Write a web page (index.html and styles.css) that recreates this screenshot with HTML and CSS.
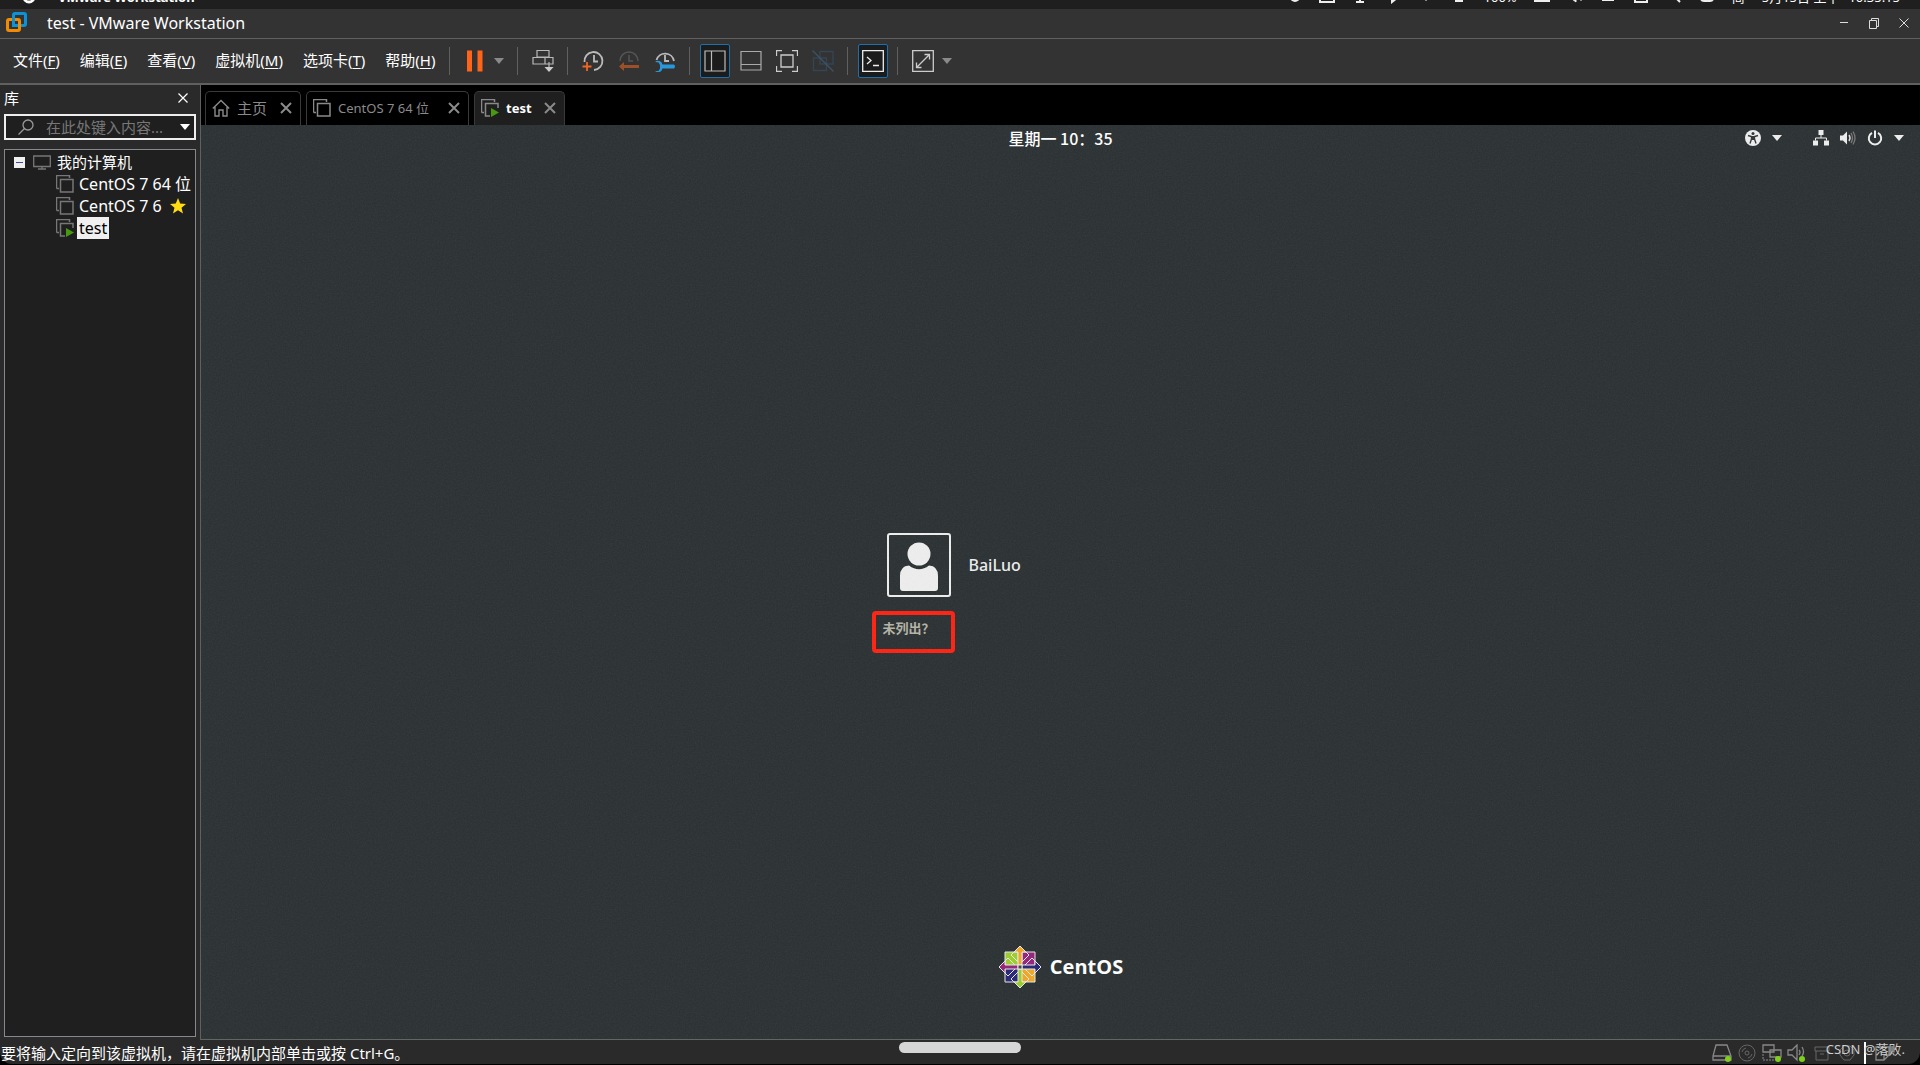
FILE: index.html
```html
<!DOCTYPE html>
<html lang="zh-CN">
<head>
<meta charset="utf-8">
<title>test - VMware Workstation</title>
<link rel="stylesheet" href="styles.css">
</head>
<body>
<svg class="defs" aria-hidden="true">
  <symbol id="vm" viewBox="0 0 18 18"><path d="M0.5 13.5V.5H13.5V3M.5 13.5H3M4.5 4.5H17V17H4.5z" fill="none" stroke="currentColor" stroke-width="1.5"/></symbol>
  <symbol id="vmrun" viewBox="0 0 18 18"><path d="M.5 13.5V.5H13.5V3M.5 13.5H3M17 9V4.500H4.500V17H9" fill="none" stroke="currentColor" stroke-width="1.5"/><path d="M10 9L18 13.500L10 18z" fill="#479a10"/></symbol>
  <symbol id="cross" viewBox="0 0 12 12"><path d="M1 1L11 11M11 1L1 11" fill="none" stroke="currentColor" stroke-width="2"/></symbol>
  <symbol id="thin-cross" viewBox="0 0 10 10"><path d="M.5 .5L9.500 9.500M9.500 .5L.5 9.500" fill="none" stroke="currentColor" stroke-width="1.200"/></symbol>
  <symbol id="caret" viewBox="0 0 10 6"><path d="M0 0H10L5 6z" fill="currentColor"/></symbol>
</svg>
<div class="app">
  <div class="macbar">
    <svg class="apple" viewBox="0 0 14 14"><circle cx="7" cy="7" r="5" fill="none" stroke="#fff" stroke-width="3"/></svg>
    <b class="macapp">VMware Workstation</b>
    <div class="tray">
      <svg class="i16" viewBox="0 0 16 16"><circle cx="6" cy="8" r="4" fill="#1a8a50"/><circle cx="9" cy="9" r="5" fill="#eee"/></svg>
      <svg class="i16" viewBox="0 0 16 16"><path d="M1 2V14H15V5M5 2V11H15" fill="none" stroke="#eee" stroke-width="2"/></svg>
      <svg class="i16" viewBox="0 0 16 16"><path d="M4 4V8Q8 13 12 8V4M8 10V14M4 14H12" fill="none" stroke="#eee" stroke-width="2"/></svg>
      <svg class="i16" viewBox="0 0 16 16"><path d="M4 4L12 10L7 14V2" fill="none" stroke="#eee" stroke-width="2"/></svg>
      <svg class="i16" viewBox="0 0 16 16"><path d="M3 8H13L8 13z" fill="#eee"/></svg>
      <svg class="i16" viewBox="0 0 16 16"><path d="M1 3H15V12H12V14H4V12H1z" fill="#eee"/></svg>
      <span>100%</span>
      <svg class="i16" viewBox="0 0 16 16"><path d="M1 4H15V13H1zM8 4V13M4 9H12" fill="none" stroke="#eee" stroke-width="2"/></svg>
      <svg class="i16" viewBox="0 0 16 16"><path d="M2 6H5L9 2V14L5 11H2zM11 6V12M14 4V13" fill="#eee" stroke="#eee"/></svg>
      <svg class="i16" viewBox="0 0 16 16"><path d="M2 3H14V13H2z" fill="#eee"/></svg>
      <svg class="i16" viewBox="0 0 16 16"><path d="M2 4V14H14V4M5 10Q10 12 12 4" fill="none" stroke="#eee" stroke-width="2"/></svg>
      <svg class="i16" viewBox="0 0 16 16"><circle cx="7" cy="6" r="4" fill="none" stroke="#eee" stroke-width="2"/><path d="M9 9L14 14" stroke="#eee" stroke-width="2"/></svg>
      <svg class="i16" viewBox="0 0 16 16"><rect x="1" y="6" width="14" height="8" rx="4" fill="#eee"/><circle cx="11" cy="10" r="2" fill="#222"/></svg>
      <span>简</span><span>5月15日 上午</span><span class="clock">10:35:15</span>
    </div>
  </div>

  <header class="titlebar">
    <svg class="logo" viewBox="0 0 22 22"><rect x="7.500" y="1.500" width="12" height="12" rx="1.500" fill="none" stroke="#0c93d5" stroke-width="3"/><rect x="1.500" y="7.500" width="12" height="11" rx="1.500" fill="none" stroke="#f38b00" stroke-width="3"/><path d="M7.500 6V13.500H12" fill="none" stroke="#0c93d5" stroke-width="3"/></svg>
    <span class="title">test - VMware Workstation</span>
    <button class="winbtn" aria-label="最小化"><svg viewBox="0 0 12 12"><path d="M2 5.500H10" stroke="#ddd"/></svg></button>
    <button class="winbtn" aria-label="还原"><svg viewBox="0 0 12 12"><path d="M1.500 3.500H8.500V11.500H1.500zM3.500 3V1.500H10.500V9.500H9" fill="none" stroke="#ddd"/></svg></button>
    <button class="winbtn" aria-label="关闭"><svg viewBox="0 0 12 12"><path d="M1.500 1.500L10.500 10.500M10.500 1.500L1.500 10.500" stroke="#ddd"/></svg></button>
  </header>

  <nav class="menubar">
    <div class="menus">
      <button>文件(<u>F</u>)</button><button>编辑(<u>E</u>)</button><button>查看(<u>V</u>)</button><button>虚拟机(<u>M</u>)</button><button>选项卡(<u>T</u>)</button><button>帮助(<u>H</u>)</button>
    </div>
    <div class="tools t-power">
      <button class="tool" aria-label="挂起"><svg viewBox="0 0 22 22"><path d="M3 .5H8V21.500H3zM13.500 .5H18.500V21.500H13.500z" fill="#ff6418"/></svg></button>
      <button class="drop" aria-label="电源选项"><svg class="caret"><use href="#caret"/></svg></button>
    </div>
    <div class="tools t-send">
      <button class="tool" aria-label="发送 Ctrl+Alt+Del"><svg viewBox="0 0 22 22" fill="none" stroke="#b8b8b8" stroke-width="1.200"><path d="M5 .5H17V7H5zM1 7.500H13V14H1zM13 7.500H21V14H13M17 12V20"/><path d="M12.500 17H21.500L17 22z" fill="#ccc" stroke="none"/></svg></button>
    </div>
    <div class="tools t-snap">
      <button class="tool" aria-label="拍摄快照"><svg viewBox="0 0 22 22" fill="none" stroke="#bbb" stroke-width="1.800"><path d="M2.500 12A9 9 0 1 1 12 20M12 5V11.500H16"/><path d="M5 12V21M.5 16.500H9.500" stroke="#f26522"/></svg></button>
      <button class="tool" aria-label="恢复快照"><svg viewBox="0 0 22 22" fill="none" stroke="#555" stroke-width="1.500"><path d="M2 11A9 9 0 0 1 20 11M11 5V11H15"/><path d="M1 16.500L6 12V15H21V18H6V21z" fill="#9b5028" stroke="none"/></svg></button>
      <button class="tool" aria-label="快照管理器"><svg viewBox="0 0 22 22" fill="none" stroke="#bbb" stroke-width="1.800"><path d="M2.500 10A9 9 0 0 1 20 11M11 5V11H15"/><path d="M1 12A4.500 4.500 0 0 1 8.500 14.500H20Q22 16.500 20 18.500H8.500A4.500 4.500 0 0 1 1 21H4.500L6 18.500V15L4.500 12.500z" fill="#2997dc" stroke="none"/></svg></button>
    </div>
    <div class="tools t-view">
      <button class="tool on" aria-label="显示库"><svg viewBox="0 0 22 22" fill="none" stroke="#bbb" stroke-width="1.200"><path d="M1 1H21V21H1zM7.500 1V21"/></svg></button>
      <button class="tool" aria-label="缩略图栏"><svg viewBox="0 0 22 22" fill="none" stroke="#aaa" stroke-width="1.200"><path d="M1 1.500H21V20H1zM1 14.500H21"/></svg></button>
      <button class="tool" aria-label="全屏"><svg viewBox="0 0 22 22" fill="none" stroke="#ccc" stroke-width="1.300"><path d="M.5 6V.5H6M16 .5H21.500V6M21.500 16V21.500H16M6 21.500H.5V16M5 5H17V17H5z"/></svg></button>
      <button class="tool" aria-label="Unity"><svg viewBox="0 0 22 22" fill="none" stroke="#344655" stroke-width="1.300"><path d="M8 1.500H21V14H8zM1.500 8H14.500V20.500H1.500z"/><path d="M.5 .5L21.500 21.500" stroke="#3c5266"/></svg></button>
    </div>
    <div class="tools t-console">
      <button class="tool on" aria-label="控制台视图"><svg viewBox="0 0 22 22" fill="none" stroke="#eee" stroke-width="1.300"><path d="M.7 .7H21.300V21.300H.7zM5 7L9 10.500L5 14M11 15.500H17"/></svg></button>
    </div>
    <div class="tools t-stretch">
      <button class="tool" aria-label="自由拉伸"><svg viewBox="0 0 22 22" fill="none" stroke="#ccc" stroke-width="1.300"><path d="M.7 .7H21.300V21.300H.7zM5 17L17 5M12.500 4.500H17.500V9.500M4.500 12.500V17.500H9.500"/></svg></button>
      <button class="drop" aria-label="拉伸选项"><svg class="caret"><use href="#caret"/></svg></button>
    </div>
  </nav>

  <div class="main">
    <aside class="library">
      <div class="libhead"><span>库</span><button aria-label="关闭库"><svg class="i10"><use href="#thin-cross"/></svg></button></div>
      <div class="search">
        <svg class="i16" viewBox="0 0 16 16" fill="none" stroke="#999" stroke-width="1.300"><circle cx="10" cy="6" r="5"/><path d="M6.500 9.500L.5 15.500"/></svg>
        <input type="text" placeholder="在此处键入内容..." aria-label="搜索库">
        <svg class="caret"><use href="#caret"/></svg>
      </div>
      <ul class="tree">
        <li class="root"><svg class="i11" viewBox="0 0 11 11"><path d="M0 0H11V11H0z" fill="#f0f0f0"/><path d="M2 5.500H9" stroke="#3a4f9a"/></svg><svg class="i18" viewBox="0 0 18 16"><path d="M.7 2H17.300V12.500H.7zM9 12.500V15M5 15H13" fill="none" stroke="#777" stroke-width="1.300"/></svg><span>我的计算机</span></li>
        <li><svg class="i18"><use href="#vm"/></svg><span>CentOS 7 64 位</span></li>
        <li><svg class="i18"><use href="#vm"/></svg><span>CentOS 7 6</span><svg class="star" viewBox="0 0 16 16"><path d="M8 0L10.200 5.500L16 6L11.500 9.800L13 15.500L8 12.300L3 15.500L4.500 9.800L0 6L5.800 5.500z" fill="#ffdc14"/></svg></li>
        <li><svg class="i18"><use href="#vmrun"/></svg><span class="selected">test</span></li>
      </ul>
    </aside>

    <section class="work">
      <div class="tabs">
        <div class="tab home"><svg class="i18" viewBox="0 0 18 18"><path d="M.8 9.500L9 1.500L17.200 9.500M3 8V17H7V11H11V17H15V8" fill="none" stroke="#8a8a8a" stroke-width="1.400"/></svg><span>主页</span><button aria-label="关闭主页"><svg class="i12"><use href="#cross"/></svg></button></div>
        <div class="tab wide"><svg class="i18"><use href="#vm"/></svg><span>CentOS 7 64 位</span><button aria-label="关闭 CentOS"><svg class="i12"><use href="#cross"/></svg></button></div>
        <div class="tab active"><svg class="i18"><use href="#vmrun"/></svg><span>test</span><button aria-label="关闭 test"><svg class="i12"><use href="#cross"/></svg></button></div>
      </div>
      <div class="guest">
        <svg class="grain" aria-hidden="true"><filter id="noise"><feTurbulence type="fractalNoise" baseFrequency=".7" numOctaves="2"/><feColorMatrix type="saturate" values="0"/></filter><rect width="100%" height="100%" filter="url(#noise)"/></svg>
        <div class="panel">
          <span></span>
          <time>星期一 10：35</time>
          <div class="status-icons">
            <svg class="i16" viewBox="0 0 16 16"><circle cx="8" cy="8" r="8" fill="#eee"/><circle cx="8" cy="3.500" r="1.500" fill="#2e3436"/><path d="M3 5.500L6.500 6.500V9L5 13.500M13 5.500L9.500 6.500V9L11 13.500" fill="none" stroke="#2e3436" stroke-width="1.400"/><path d="M6 6H10V10H6z" fill="#2e3436"/></svg>
            <svg class="caret"><use href="#caret"/></svg>
            <svg class="i16 net" viewBox="0 0 16 16"><path d="M5.500 0H10.500V5H5.500zM0 10.500H5V15.500H0zM11 10.500H16V15.500H11z" fill="#eee"/><path d="M8 5V8M2.500 10.500V8H13.500V10.500" fill="none" stroke="#eee"/></svg>
            <svg class="i16" viewBox="0 0 16 16"><path d="M0 5.500H3L7 1.500V14.500L3 10.500H0z" fill="#eee"/><path d="M9 5Q11 8 9 11" fill="none" stroke="#ddd" stroke-width="1.500"/><path d="M11 3Q14 8 11 13M13 1.500Q17 8 13 14.500" fill="none" stroke="#777" stroke-width="1.300"/></svg>
            <svg class="i16" viewBox="0 0 16 16" fill="none" stroke="#eee" stroke-width="2"><path d="M5 2.800A6.200 6.200 0 1 0 11 2.800M8 .5V8"/></svg>
            <svg class="caret"><use href="#caret"/></svg>
          </div>
        </div>
        <div class="login">
          <button class="user"><svg class="avatar" viewBox="0 0 60 60"><circle cx="30" cy="19" r="11.500" fill="#eee"/><path d="M11 53V41Q11 31 20 30.500Q30 38 40 30.500Q49 31 49 41V53Q49 56 46 56H14Q11 56 11 53z" fill="#eee"/></svg><span>BaiLuo</span></button>
          <button class="other">未列出？</button>
        </div>
        <div class="brand">
          <svg class="centos" viewBox="-22 -22 44 44" stroke="#e8e8e8" stroke-width="1">
            <path d="M-15 -15H-1V-1H-15z" fill="#9ccd2a"/><path d="M1 -15H15V-1H1z" fill="#932279"/><path d="M-15 1H-1V15H-15z" fill="#262577"/><path d="M1 1H15V15H1z" fill="#efa724"/>
            <path d="M0 -21L9 -12L0 -3L-9 -12zM0 21L9 12L0 3L-9 12zM-21 0L-12 -9L-3 0L-12 9zM21 0L12 -9L3 0L12 9z" fill="none"/>
            <path d="M0 -21L9 -12L2 -5V-15H-2V-5L-9 -12z" fill="none"/>
            <path d="M0 -21L6 -15H2V-2H-2V-15H-6z" fill="#efa724"/><path d="M0 21L6 15H2V2H-2V15H-6z" fill="#9ccd2a"/><path d="M-21 0L-15 -6V-2H-2V2H-15V6z" fill="#932279"/><path d="M21 0L15 -6V-2H2V2H15V6z" fill="#262577"/><path d="M-2 -2H2V2H-2z" fill="#444"/>
          </svg>
          <span>CentOS</span>
        </div>
      </div>
    </section>
  </div>

  <footer class="statusbar">
    <span>要将输入定向到该虚拟机，请在虚拟机内部单击或按 Ctrl+G。</span>
    <div class="devices">
      <svg viewBox="0 0 20 18"><path d="M4 1H15L19 12V16H1V12zM1 12H19" fill="none" stroke="#888" stroke-width="1.300"/><circle cx="16" cy="15" r="3" fill="#7fd01c"/></svg>
      <svg viewBox="0 0 20 18" fill="none" stroke="#666"><circle cx="10" cy="9" r="8"/><circle cx="10" cy="9" r="2"/><path d="M5 8A5 5 0 0 1 9 4M15 10A5 5 0 0 1 11 14"/></svg>
      <svg viewBox="0 0 20 18"><path d="M1 1H12V8H1zM8 6H19V13H8z" fill="#2a2a2a" stroke="#888" stroke-width="1.300"/><path d="M1 10V16H12" fill="none" stroke="#888" stroke-dasharray="2 1"/><circle cx="16" cy="15" r="3" fill="#7fd01c"/></svg>
      <svg viewBox="0 0 20 18"><path d="M1 6H5L10 1V16L5 11H1zM12 6Q14 8 12 11M15 3Q18 8 15 12" fill="none" stroke="#888" stroke-width="1.300"/><circle cx="15" cy="15" r="3" fill="#7fd01c"/></svg>
      <svg viewBox="0 0 20 18" fill="none" stroke="#666"><path d="M3 3H17V7H3zM4 7V16H16V7M8 10H12"/></svg>
      <svg viewBox="0 0 20 18" fill="none" stroke="#666"><path d="M7 2H13L17 6V11L13 16H7L3 11V6z"/><circle cx="10" cy="9" r="3"/></svg>
      <svg class="note" viewBox="0 0 20 18" fill="none" stroke="#888" stroke-width="1.300"><path d="M2 3H15V11L10 16H2zM10 16V11H15L19 7"/></svg>
    </div>
    <span class="cursor"></span>
    <span class="watermark">CSDN @落败.</span>
    <span class="pill"></span>
  </footer>
</div>
</body>
</html>
```
FILE: styles.css
```css
* { box-sizing: border-box; }
body {
  margin: 0;
  background: #000;
  color: #fff;
  font: 15px/22px "Noto Sans", "Noto Sans CJK SC", sans-serif;
}
button {
  padding: 0;
  border: 0;
  background: none;
  color: inherit;
  font: inherit;
}
svg { display: block; flex: none; }
.defs { position: absolute; width: 0; height: 0; }
.i10 { width: 10px; height: 10px; }
.i11 { width: 11px; height: 11px; }
.i12 { width: 12px; height: 12px; }
.i16 { width: 16px; height: 16px; }
.i18 { width: 18px; height: 18px; }
.caret { width: 10px; height: 6px; }

.app { display: flex; flex-direction: column; height: 100vh; padding-bottom: 1px; }

/* desktop menu bar, scrolled mostly out of view */
.macbar {
  display: flex;
  align-items: flex-end;
  flex: none;
  height: 9px;
  padding: 0 20px 5px 22px;
  overflow: hidden;
  background: #1f1f1f;
  font-size: 13px;
  line-height: 14px;
}
.apple { width: 14px; height: 14px; }
.macapp { margin: 0 auto 0 22px; }
.tray { display: flex; align-items: flex-end; gap: 17px; }
.clock { margin-left: -8px; }

.titlebar {
  display: flex;
  align-items: center;
  flex: none;
  height: 30px;
  padding: 0 10px 2px 6px;
  border-bottom: 1px solid #606060;
  background: #333;
}
.logo { width: 22px; height: 22px; }
.title { margin: 0 auto 0 19px; font-size: 16px; }
.winbtn { margin-left: 18px; }
.winbtn svg { width: 12px; height: 12px; }

.menubar {
  display: flex;
  align-items: center;
  flex: none;
  height: 46px;
  padding-left: 13px;
  border-bottom: 2px solid #606060;
  background: #333;
}
.menus { display: flex; gap: 20px; width: 436px; padding-bottom: 3px; white-space: nowrap; }
.menus u { text-underline-offset: 2px; }
.tools {
  display: flex;
  align-items: center;
  height: 28px;
  padding-left: 10px;
  border-left: 1px solid #606060;
}
.tool {
  display: grid;
  place-items: center;
  width: 30px;
  height: 34px;
  border: 1px solid transparent;
}
.tool svg { width: 22px; height: 22px; }
.tool.on { border: 1px solid #1f6fab; border-radius: 2px; background: #1c1c1c; }
.drop { padding: 0 4px; color: #8a8a8a; }
.t-power { width: 68px; }
.t-send { width: 50px; }
.t-snap { gap: 6px; width: 122px; }
.t-view { gap: 6px; width: 158px; }
.t-console { width: 50px; }

.main { display: flex; flex: 1; min-height: 0; }
.library {
  display: flex;
  flex-direction: column;
  flex: none;
  width: 200px;
  padding: 2px 4px 3px;
  background: #2a2a2a;
}
.libhead { display: flex; justify-content: space-between; padding-right: 8px; }
.search {
  display: flex;
  align-items: center;
  height: 26px;
  margin: 5px 0 9px;
  padding: 0 4px 0 12px;
  border: 2px solid #eee;
  background: #1f1f1f;
}
.search input {
  flex: 1;
  min-width: 0;
  margin: 0 8px 0 12px;
  padding: 0;
  border: 0;
  background: none;
  color: #fff;
  font: inherit;
}
.search input::placeholder { color: #777; opacity: 1; }
.tree {
  flex: 1;
  margin: 0;
  padding: 1px 0;
  border: 1px solid #85888f;
  background: #1f1f1f;
  list-style: none;
  font-size: 16px;
  white-space: nowrap;
}
.tree li { display: flex; align-items: center; height: 22px; padding-left: 51px; color: #777; }
.tree li.root { padding-left: 9px; font-size: 15px; }
.root .i18 { margin: 0 4px 0 8px; }
.tree span { padding: 0 2px; margin-left: 3px; color: #fff; }
.tree .root span { margin-left: 0; }
.tree .selected { background: #f0f0f0; color: #000; }
.star { width: 16px; height: 16px; margin-left: 6px; }

.work { display: flex; flex-direction: column; flex: 1; min-width: 0; border-left: 1px solid #606060; }
.tabs { display: flex; gap: 5px; padding: 6px 4px 0; background: #000; }
.tab {
  display: flex;
  align-items: center;
  height: 34px;
  padding: 0 8px 2px 6px;
  border: 1px solid #3a3a3a;
  border-bottom: 0;
  border-radius: 5px 5px 0 0;
  color: #8a8a8a;
  font-size: 13px;
}
.tab span { margin: 0 auto 0 7px; }
.tab.home { width: 96px; font-size: 15px; }
.tab.wide { width: 163px; }
.tab.active { width: 91px; background: #1f1f1f; font-weight: bold; }
.tab.active span { color: #fff; }

.guest {
  position: relative;
  display: flex;
  flex-direction: column;
  flex: 1;
  border-bottom: 1px solid #606860;
  background: #2a3032;
}
.grain { position: absolute; width: 100%; height: 100%; opacity: .08; }
.panel {
  display: grid;
  grid-template-columns: 1fr auto 1fr;
  align-items: center;
  height: 25px;
}
.panel time { font: 500 16px/22px "Noto Sans CJK TC", sans-serif; }
.status-icons { display: flex; align-items: center; justify-content: flex-end; gap: 11px; padding-right: 16px; color: #eee; }
.net { margin-left: 20px; }
.login {
  display: flex;
  flex-direction: column;
  align-items: flex-start;
  gap: 14px;
  margin: auto;
  width: 378px;
  padding-top: 90px;
}
.user { display: flex; align-items: center; gap: 18px; margin-left: 15px; color: #eee; font-size: 16px; font-weight: 500; }
.avatar { width: 64px; height: 64px; border: 2px solid #eee; border-radius: 3px; }
.other {
  width: 83px;
  height: 42px;
  padding: 0 0 8px 7px;
  border: 4px solid #ff2010;
  border-radius: 4px;
  color: #b5b3a6;
  font: bold 13px/22px "Noto Sans CJK TC", sans-serif;
  text-align: left;
}
.brand { display: flex; align-items: center; justify-content: center; gap: 8px; padding-bottom: 50px; font: bold 20px/22px "Open Sans", sans-serif; }
.centos { width: 44px; height: 44px; }

.statusbar {
  position: relative;
  display: flex;
  justify-content: space-between;
  align-items: center;
  flex: none;
  height: 24px;
  padding: 2px 26px 0 1px;
  border-radius: 0 0 12px 12px;
  background: #2a2a2a;
}
.devices { display: flex; gap: 5px; }
.devices svg { width: 20px; height: 18px; }
.devices .note { margin-left: 12px; }
.cursor { position: absolute; right: 54px; top: 2px; width: 2px; height: 22px; background: #fff; }
.watermark { position: absolute; right: 15px; top: -2px; color: #ccc; font-size: 13px; }
.pill { position: absolute; left: 50%; top: 2px; width: 122px; height: 11px; margin-left: -61px; border-radius: 6px; background: #d6d6d6; }
```
